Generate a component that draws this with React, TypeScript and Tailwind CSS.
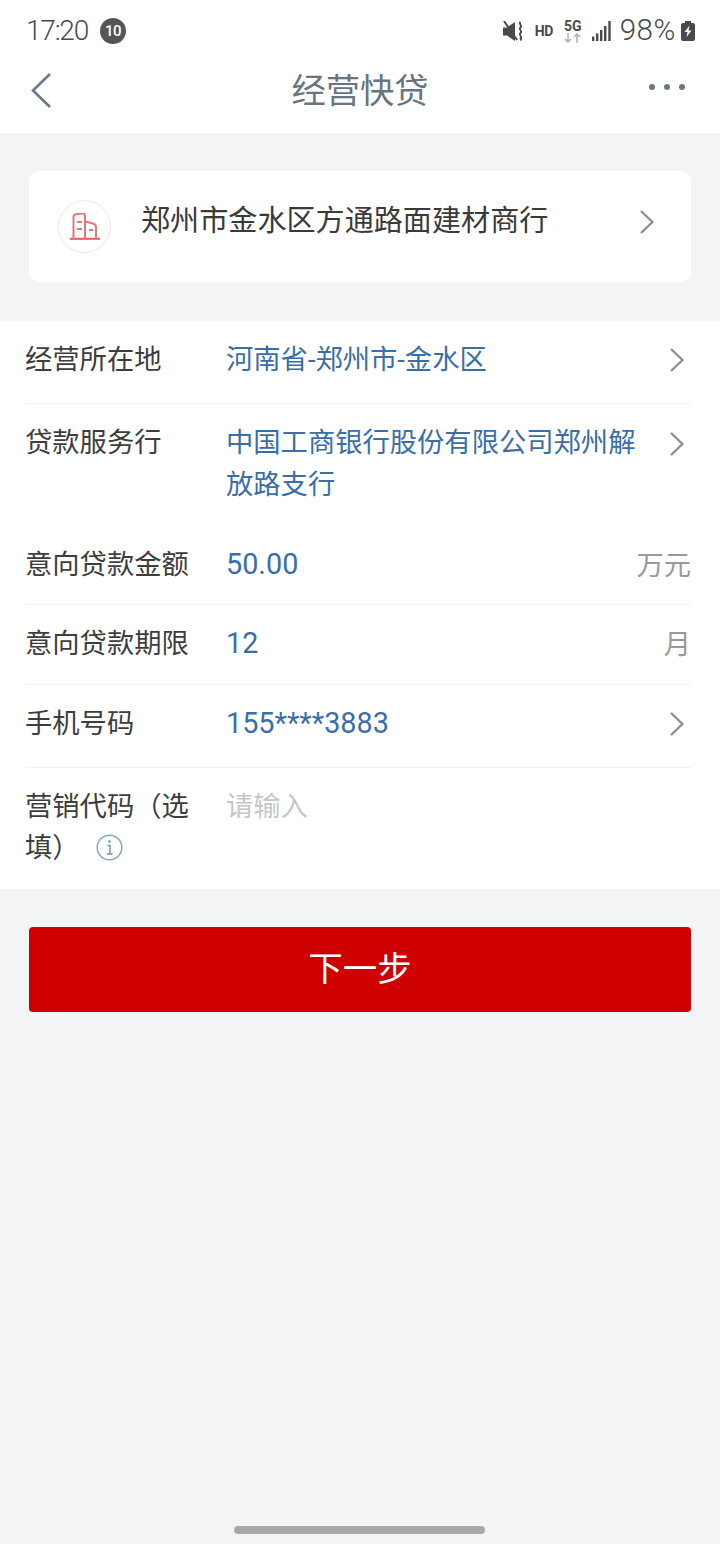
import React from 'react';

const cjk = "font-['Roboto','Noto_Sans_CJK_SC',sans-serif]";

const Chevron = ({ className = '' }: { className?: string }) => (
  <svg width="16" height="26" viewBox="0 0 16 26" fill="none" className={className}>
    <path d="M2 2 L13.5 13 L2 24" stroke="#8a8e93" strokeWidth="2.3" />
  </svg>
);

const StatusBar = () => (
  <div className="h-[60px] flex items-center justify-between pl-[26px] pr-[25px] pt-[2px] bg-white text-[#4a4a4a]">
    <div className="flex items-center gap-[12px]">
      <span className="text-[28px] leading-none font-light tracking-[-1.2px]">17:20</span>
      <span className="w-[26px] h-[26px] rounded-full bg-[#555555] text-white text-[15px] font-medium tracking-[-0.5px] flex items-center justify-center">10</span>
    </div>
    <div className="flex items-center">
      <svg width="21" height="21" viewBox="0 0 21 21" className="mr-[11px]">
        <path d="M0 6.500h4l8-5.500v19l-8-5.500H0z" fill="#4a4a4a" />
        <path d="M1 0l13 19" stroke="#4a4a4a" strokeWidth="2" />
        <path d="M17.500 1c-2.500 2 2.500 3.500 0 5.500s2.500 3.500 0 5.500 2.500 3.500 0 5.500l1 2" stroke="#4a4a4a" strokeWidth="1.800" fill="none" />
      </svg>
      <span className="text-[14px] font-bold mr-[11px] leading-none tracking-[-0.3px]">HD</span>
      <div className="flex flex-col items-center mr-[10px] leading-none">
        <span className="text-[14px] font-bold leading-[13px]">5G</span>
        <svg width="17" height="10" viewBox="0 0 17 10">
          <path d="M4 0v9M1 6l3 3 3-3M13 10V1M10 4l3-3 3 3" stroke="#b0b0b0" strokeWidth="1.500" fill="none" />
        </svg>
      </div>
      <svg width="19" height="20" viewBox="0 0 19 20" className="mr-[9px]">
        <path d="M0 15.500h2.400V20H0zM4 12.500h2.400V20H4zM8 9h2.400v11H8zM12 5h2.400v15H12zM16.300 0h2.400v20h-2.400z" fill="#4a4a4a" />
      </svg>
      <span className="text-[29.500px] leading-none font-light tracking-[0.6px] mr-[5px]">98%</span>
      <svg width="14" height="20" viewBox="0 0 14 20">
        <path d="M4 0h6v2h2a2 2 0 0 1 2 2v14a2 2 0 0 1-2 2H2a2 2 0 0 1-2-2V4a2 2 0 0 1 2-2h2z" fill="#4a4a4a" />
        <path d="M8.500 4.500L3.500 11h3l-1 5 5-6.500H7.500z" fill="#fff" />
      </svg>
    </div>
  </div>
);

const Header = () => (
  <div className="h-[73px] bg-white relative flex items-center justify-center">
    <svg width="24" height="38" viewBox="0 0 24 38" fill="none" className="absolute left-[30px] top-[12px]">
      <path d="M20 2 L3 18.500 L20 35" stroke="#68798a" strokeWidth="2.600" />
    </svg>
    <span className="text-[34.300px] leading-none text-[#68747f] -mt-[11px]">经营快贷</span>
    <div className="absolute left-[649px] top-[24px] flex gap-[9px]">
      <span className="w-[6px] h-[6px] rounded-full bg-[#68798a]" />
      <span className="w-[6px] h-[6px] rounded-full bg-[#68798a]" />
      <span className="w-[6px] h-[6px] rounded-full bg-[#68798a]" />
    </div>
  </div>
);

const Row = ({ label, children, right, className = '', plain }: { label: React.ReactNode; children: React.ReactNode; right?: React.ReactNode; className?: string; plain?: boolean }) => (
  <div className={`ml-[25px] mr-[29px] flex ${plain ? '' : 'border-b border-[#f1f2f4]'} ${className}`}>
    <div className="w-[201px] shrink-0 text-[27.300px] leading-[41px] text-[#3d3d3d]">{label}</div>
    <div className="flex-1 -mt-[1px] text-[27.300px] leading-[42px] text-[#3a6ea8]">{children}</div>
    {right}
  </div>
);

const Num = ({ children }: { children: React.ReactNode }) => (
  <span className="inline-block -translate-y-[1px] text-[28.800px]">{children}</span>
);

export default function App() {
  return (
    <div className={`w-[720px] h-[1544px] bg-[#f3f4f6] flex flex-col relative overflow-hidden ${cjk}`}>
      <StatusBar />
      <Header />

      <div className="mt-[38px] mx-[29px] h-[111px] bg-white rounded-[10px] flex items-center pl-[29px] pr-[36px]">
        <div className="w-[53px] h-[53px] rounded-full border border-[#e9e9e9] flex items-center justify-center">
          <svg width="30" height="27" viewBox="0 0 30 27" fill="none" stroke="#e07a76" strokeWidth="2">
            <path d="M0 25.800h30" stroke="#d9605c" />
            <path d="M3.500 26V4q0-2.500 2.500-2.800l6-.7q3-.3 3 2.500V26M15 8.500l8 2q3 .8 3 3.500v12" />
            <path d="M7 9h5M7 16h5M19 17h4" />
          </svg>
        </div>
        <span className="ml-[30px] flex-1 text-[29.100px] leading-none text-[#3a3a3a] -mt-[10px]">郑州市金水区方通路面建材商行</span>
        <Chevron className="-mt-[10px]" />
      </div>

      <div className="mt-[39px] bg-white h-[568px] flex flex-col">
        <Row label="经营所在地" className="h-[83px] pt-[19px]" right={<Chevron className="mr-[6px] mt-[7px]" />}>
          河南省-郑州市-金水区
        </Row>
        <Row label="贷款服务行" plain className="h-[121px] pt-[19px]" right={<Chevron className="mr-[6px] mt-[8px] ml-[26px]" />}>
          中国工商银行股份有限公司郑州解放路支行
        </Row>
        <Row label="意向贷款金额" className="h-[80px] pt-[20px]" right={<span className="text-[27.300px] leading-[42px] text-[#9a9a9a]">万元</span>}>
          <Num>50.00</Num>
        </Row>
        <Row label="意向贷款期限" className="h-[80px] pt-[19px]" right={<span className="text-[27.300px] leading-[42px] text-[#9a9a9a]">月</span>}>
          <Num>12</Num>
        </Row>
        <Row label="手机号码" className="h-[83px] pt-[19px]" right={<Chevron className="mr-[6px] mt-[7px]" />}>
          <Num>155****3883</Num>
        </Row>
        <Row
          label={
            <>
              营销代码（选填）
              <svg width="27" height="27" viewBox="0 0 27 27" fill="none" className="inline-block ml-[16px] -mt-[4px]">
                <circle cx="13.500" cy="13.500" r="12.300" stroke="#7fa6cc" strokeWidth="1.500" />
                <circle cx="13.500" cy="7.500" r="1.300" fill="#6b94bd" />
                <path d="M11.500 11.500h2.500v8M11 20h5.500" stroke="#6b94bd" strokeWidth="1.400" />
              </svg>
            </>
          }
          className="h-[121px] pt-[19px]"
          plain
        >
          <span className="text-[#c4c7c9]">请输入</span>
        </Row>
      </div>

      <button type="button" className="mt-[38px] mx-[29px] h-[85px] rounded-[4px] bg-[#cf0000] text-white text-[34.500px] leading-none">
        下一步
      </button>

      <div className="absolute left-[234px] top-[1526px] w-[251px] h-[8px] rounded-full bg-[#a8a8a8]" />
    </div>
  );
}
